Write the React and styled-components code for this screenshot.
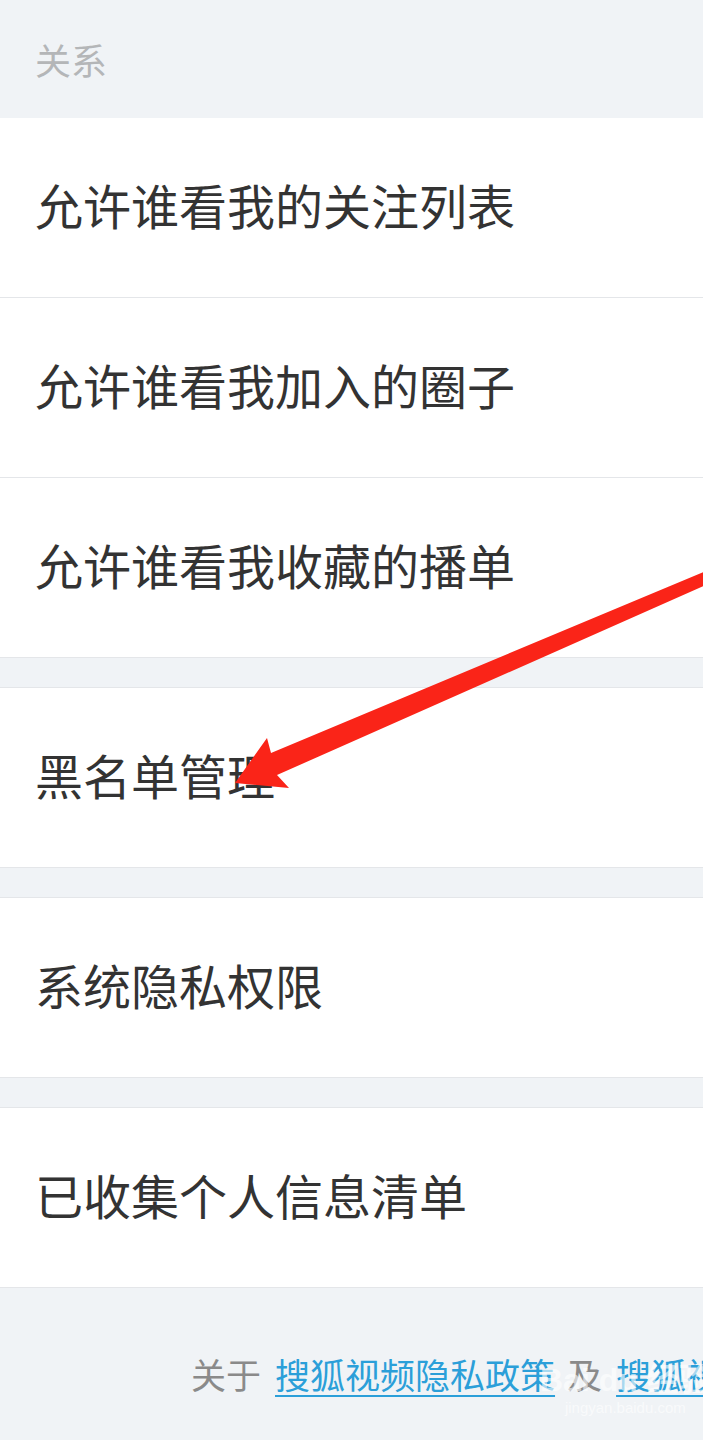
import React from "react";
import styled, { createGlobalStyle } from "styled-components";

const GlobalStyle = createGlobalStyle`
  html, body {
    margin: 0;
    padding: 0;
    background-color: #f0f3f6;
  }
  body {
    font-family: "Noto Sans CJK SC", "Noto Sans", sans-serif;
  }
`;

const Page = styled.div`
  position: relative;
  width: 703px;
  height: 1440px;
  overflow: hidden;
  background-color: #f0f3f6;
`;

const SectionTitle = styled.div`
  height: 118px;
  display: flex;
  align-items: center;
  padding-left: 35px;
  box-sizing: border-box;
  font-size: 36px;
  color: #b4b6b8;
`;

const Row = styled.div`
  height: 180px;
  box-sizing: border-box;
  display: flex;
  align-items: center;
  padding: 0 0 8px 35px;
  background-color: #fff;
  border-bottom: 1px solid #e4e6e9;
  font-size: 48px;
  color: #333;
  white-space: nowrap;
`;

const Gap = styled.div`
  height: 30px;
  box-sizing: border-box;
  border-bottom: 1px solid #e4e6e9;
`;

const Footer = styled.div`
  height: 152px;
  box-sizing: border-box;
  padding: 60px 0 0 191px;
  font-size: 35px;
  color: #8a8a8a;
  white-space: nowrap;
`;

const PolicyLink = styled.a`
  margin: 0 12px 0 14px;
  color: #2b9fd9;
  text-decoration: underline;
  text-decoration-thickness: 2px;
  text-underline-offset: 6px;
`;

const Watermark = styled.div`
  position: absolute;
  left: 540px;
  top: 1362px;
  display: flex;
  flex-direction: column;
  align-items: center;
  color: rgba(255, 255, 255, 0.6);
  font-family: "Liberation Sans", "Noto Sans CJK SC", sans-serif;
  white-space: nowrap;
  pointer-events: none;
`;

const WatermarkLogo = styled.span`
  font-size: 32px;
  font-weight: bold;
  line-height: 36px;
`;

const WatermarkUrl = styled.span`
  font-size: 15px;
  line-height: 20px;
`;

const Overlay = styled.svg`
  position: absolute;
  left: 0;
  top: 0;
  pointer-events: none;
`;

const groups = [
  ["允许谁看我的关注列表", "允许谁看我加入的圈子", "允许谁看我收藏的播单"],
  ["黑名单管理"],
  ["系统隐私权限"],
  ["已收集个人信息清单"],
];

export default function App() {
  return (
    <Page>
      <GlobalStyle />
      <SectionTitle>关系</SectionTitle>
      {groups.map((items, i) => (
        <React.Fragment key={i}>
          {i > 0 && <Gap />}
          {items.map((label) => (
            <Row key={label}>{label}</Row>
          ))}
        </React.Fragment>
      ))}
      <Footer>
        关于<PolicyLink>搜狐视频隐私政策</PolicyLink>及
        <PolicyLink>搜狐视频儿童隐私政策</PolicyLink>
      </Footer>
      <Watermark>
        <WatermarkLogo>Bai du 经验</WatermarkLogo>
        <WatermarkUrl>jingyan.baidu.com</WatermarkUrl>
      </Watermark>
      <Overlay width="703" height="1440" viewBox="0 0 703 1440">
        <polygon
          points="235,783 267,738 271,753 706,571 706,585 277,775 289,788"
          fill="#fa2418"
        />
      </Overlay>
    </Page>
  );
}
